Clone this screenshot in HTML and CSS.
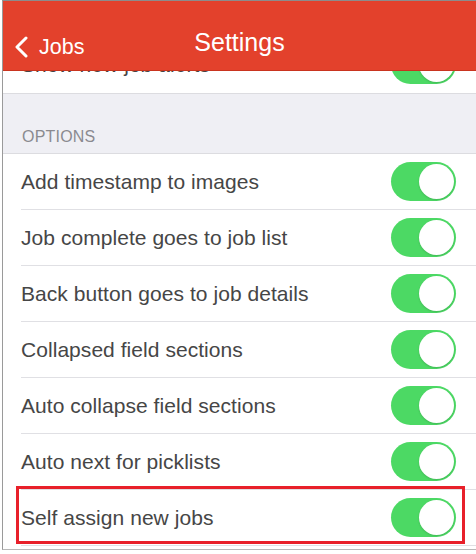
FILE: index.html
```html
<!DOCTYPE html>
<html>
<head>
<meta charset="utf-8">
<link rel="stylesheet" href="styles.css">
</head>
<body>
<div class="frame">
  <header class="nav">
    <div class="back">
      <svg class="chev" width="14" height="22" viewBox="0 0 14 22"><path d="M12 2 L3 11 L12 20" fill="none" stroke="#fff" stroke-width="3" stroke-linecap="round" stroke-linejoin="round"/></svg>
      <span class="back-label">Jobs</span>
    </div>
    <div class="title">Settings</div>
  </header>
  <div class="content">
    <div class="group group-top">
      <div class="row last">
        <span class="label">Show new job alerts</span>
        <span class="toggle"><span class="knob"></span></span>
      </div>
    </div>
    <div class="section-header">OPTIONS</div>
    <div class="group">
      <div class="row"><span class="label">Add timestamp to images</span><span class="toggle"><span class="knob"></span></span></div>
      <div class="row"><span class="label">Job complete goes to job list</span><span class="toggle"><span class="knob"></span></span></div>
      <div class="row"><span class="label">Back button goes to job details</span><span class="toggle"><span class="knob"></span></span></div>
      <div class="row"><span class="label">Collapsed field sections</span><span class="toggle"><span class="knob"></span></span></div>
      <div class="row"><span class="label">Auto collapse field sections</span><span class="toggle"><span class="knob"></span></span></div>
      <div class="row"><span class="label">Auto next for picklists</span><span class="toggle"><span class="knob"></span></span></div>
      <div class="row highlighted"><span class="label">Self assign new jobs</span><span class="toggle"><span class="knob"></span></span><span class="highlight-box"></span></div>
    </div>
  </div>
</div>
</body>
</html>
```
FILE: styles.css
```css
html, body {
  margin: 0;
  padding: 0;
  background: #fff;
}
body {
  font-family: "Liberation Sans", Arial, sans-serif;
  width: 476px;
  height: 554px;
  overflow: hidden;
}
.frame {
  position: relative;
  margin-left: 2px;
  height: 548px;
  border-top: 1px solid #8c8c8c;
  border-left: 1px solid #9a9a9a;
  border-bottom: 1px solid #b8b8b8;
  overflow: hidden;
  background: #fff;
}
.nav {
  position: absolute;
  top: 0;
  left: 0;
  right: 0;
  height: 69px;
  background: #e3412c;
  border-bottom: 1px solid #c9341f;
  z-index: 5;
  display: flex;
  align-items: center;
  justify-content: center;
  color: #fff;
}
.back {
  position: absolute;
  left: 11px;
  top: 34px;
  display: flex;
  align-items: center;
  gap: 11px;
}
.chev {
  display: block;
}
.back-label {
  font-size: 21.5px;
  line-height: 24px;
}
.title {
  font-size: 25px;
  line-height: 30px;
  margin-top: 13px;
}
.content {
  padding-top: 36px;
  background: #efeff4;
}
.group {
  background: #fff;
}
.group-top {
  border-bottom: 1px solid #dcdce0;
}
.section-header {
  height: 60px;
  box-sizing: border-box;
  padding: 34px 0 0 19px;
  font-size: 16px;
  letter-spacing: 0.2px;
  color: #8a8a8f;
  border-bottom: 1px solid #dcdce0;
}
.row {
  position: relative;
  height: 55px;
  margin-bottom: 1px;
  display: flex;
  align-items: center;
  justify-content: space-between;
  padding: 0 20px 0 18px;
}
.row::after {
  content: "";
  position: absolute;
  left: 18px;
  right: 0;
  bottom: -1px;
  height: 1px;
  background: #e0e0e4;
}
.row.last::after {
  display: none;
}
.label {
  font-size: 21px;
  color: #464646;
  letter-spacing: 0.05px;
}
.toggle {
  position: relative;
  width: 65px;
  height: 39px;
  border-radius: 20px;
  background: #4cd964;
  flex: none;
}
.knob {
  position: absolute;
  right: 2px;
  top: 2px;
  width: 35px;
  height: 35px;
  border-radius: 50%;
  background: #fff;
  box-shadow: 0 1px 2px rgba(0,0,0,0.15);
}
.highlight-box {
  position: absolute;
  left: 13px;
  right: 11px;
  top: -4px;
  bottom: 1px;
  border: 3px solid #e8202a;
  pointer-events: none;
}
```
